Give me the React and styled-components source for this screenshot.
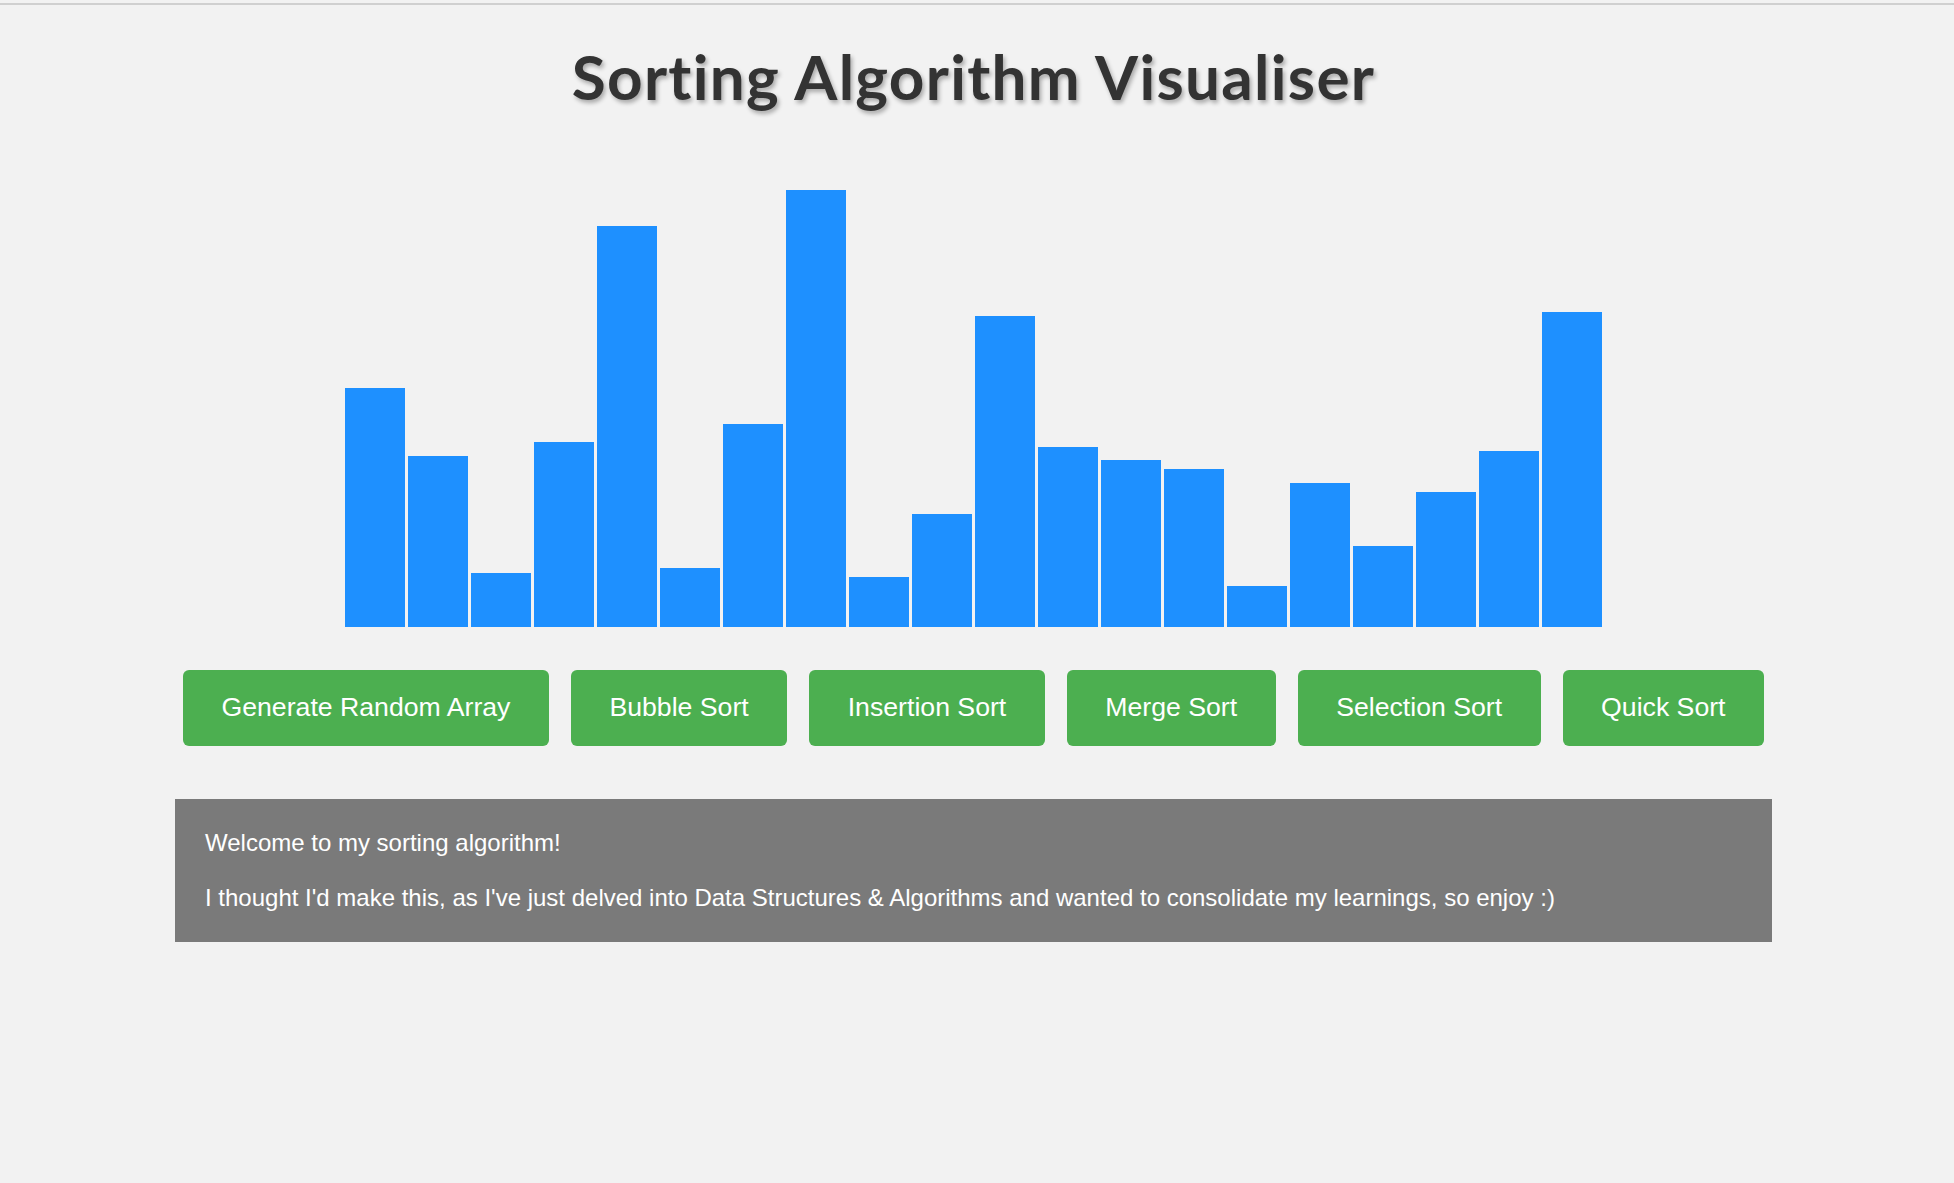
import React from 'react';
import styled, { createGlobalStyle } from 'styled-components';

const GlobalStyle = createGlobalStyle`
    html, body {
        margin: 0;
        padding: 0;
        background: #f2f2f2;
    }
    body {
        font-family: "Liberation Sans", Arial, sans-serif;
        min-height: 1183px;
    }
`

// heights of the starting (unsorted) array
const startArray = [239, 171, 54, 185, 401, 59, 203, 437, 50, 113, 311, 180, 167, 158, 41, 144, 81, 135, 176, 315];

const buttons = ['Generate Random Array', 'Bubble Sort', 'Insertion Sort', 'Merge Sort', 'Selection Sort', 'Quick Sort'];

class App extends React.Component {
    constructor(props) {
        super(props);
        this.state = {
            array: startArray
        }
    }

    render() {
        return (
            <>
                <GlobalStyle />
                <TopRule />
                <Page>
                    <Title>Sorting Algorithm Visualiser</Title>
                    <Chart>
                        {this.state.array.map((value, i) => (
                            <Bar key={i} style={{ height: value }} />
                        ))}
                    </Chart>
                    <ButtonRow>
                        {buttons.map(label => (
                            <Button key={label}>{label}</Button>
                        ))}
                    </ButtonRow>
                    <InfoBox>
                        <p>Welcome to my sorting algorithm!</p>
                        <p>I thought I'd make this, as I've just delved into Data Structures &amp; Algorithms and wanted to consolidate my learnings, so enjoy :)</p>
                    </InfoBox>
                </Page>
            </>
        )
    }
}

const TopRule = styled.div`
    margin-top: 3px;
    height: 2px;
    background: #d0d0d0;
`

const Page = styled.div`
    display: flex;
    flex-direction: column;
    align-items: center;
    padding-right: 7px;
`

const Title = styled.h1`
    margin: 35px 0 0;
    font-family: Lato, "Open Sans", sans-serif;
    font-weight: 700;
    font-size: 62px;
    line-height: 73px;
    letter-spacing: 1.3px;
    font-variant-ligatures: none;
    color: #333333;
    text-shadow: 2px 3px 4px rgba(0, 0, 0, 0.3);
`

const Chart = styled.div`
    display: flex;
    align-items: flex-end;
    gap: 3px;
    height: 450px;
    margin-top: 63.5px;
`

const Bar = styled.div`
    width: 60px;
    background: #1e90ff;
`

const ButtonRow = styled.div`
    display: flex;
    gap: 22px;
    margin-top: 43px;
`

const Button = styled.button`
    height: 76px;
    padding: 0 38.5px;
    border: none;
    border-radius: 6px;
    background: #4caf50;
    color: #ffffff;
    font-family: "Liberation Sans", Arial, sans-serif;
    font-size: 26.67px;
    cursor: pointer;
`

const InfoBox = styled.div`
    box-sizing: border-box;
    width: 1597px;
    margin-top: 53px;
    padding: 30px;
    background: #7a7a7a;
    color: #ffffff;
    font-size: 24px;
    line-height: 28px;

    p {
        margin: 0;
    }
    p + p {
        margin-top: 27px;
    }
`

export default App;
